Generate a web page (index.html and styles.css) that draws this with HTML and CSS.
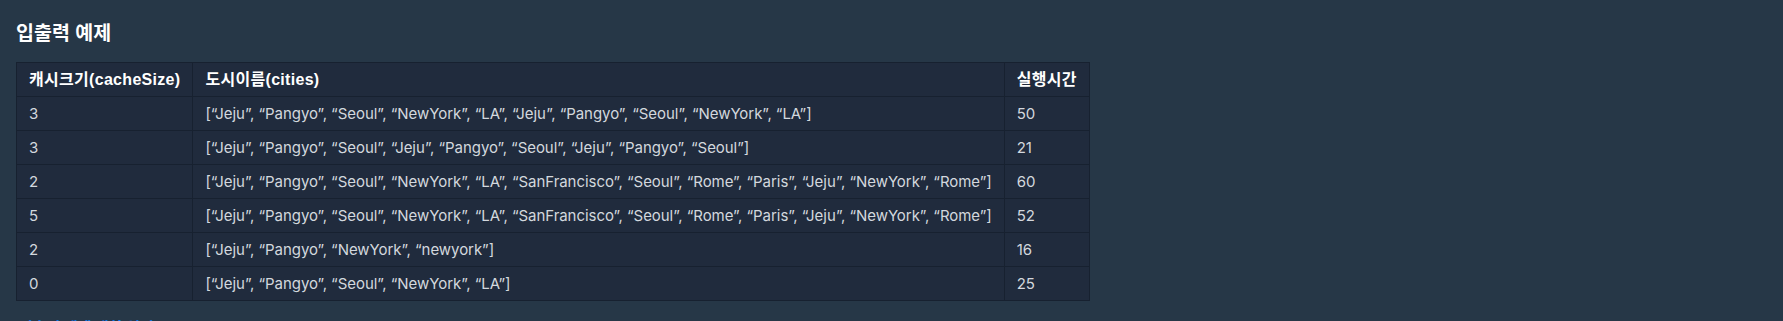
FILE: index.html
```html
<!DOCTYPE html>
<html lang="ko">
<head>
<meta charset="utf-8">
<title>입출력 예제</title>
<link rel="stylesheet" href="styles.css">
</head>
<body>
<div class="guide">
  <h5 class="title">입출력 예제</h5>
  <table class="examples">
    <thead>
      <tr><th>캐시크기(cacheSize)</th><th>도시이름(cities)</th><th>실행시간</th></tr>
    </thead>
    <tbody>
      <tr><td>3</td><td>[“Jeju”, “Pangyo”, “Seoul”, “NewYork”, “LA”, “Jeju”, “Pangyo”, “Seoul”, “NewYork”, “LA”]</td><td>50</td></tr>
      <tr><td>3</td><td>[“Jeju”, “Pangyo”, “Seoul”, “Jeju”, “Pangyo”, “Seoul”, “Jeju”, “Pangyo”, “Seoul”]</td><td>21</td></tr>
      <tr><td>2</td><td>[“Jeju”, “Pangyo”, “Seoul”, “NewYork”, “LA”, “SanFrancisco”, “Seoul”, “Rome”, “Paris”, “Jeju”, “NewYork”, “Rome”]</td><td>60</td></tr>
      <tr><td>5</td><td>[“Jeju”, “Pangyo”, “Seoul”, “NewYork”, “LA”, “SanFrancisco”, “Seoul”, “Rome”, “Paris”, “Jeju”, “NewYork”, “Rome”]</td><td>52</td></tr>
      <tr><td>2</td><td>[“Jeju”, “Pangyo”, “NewYork”, “newyork”]</td><td>16</td></tr>
      <tr><td>0</td><td>[“Jeju”, “Pangyo”, “Seoul”, “NewYork”, “LA”]</td><td>25</td></tr>
    </tbody>
  </table>
  <p class="note"><a class="link" href="#">입출력 예에 대한 설명</a></p>
</div>
</body>
</html>
```

FILE: styles.css
```css
html, body {
  margin: 0;
  padding: 0;
  background: #263747;
}
body {
  font-family: Inter, "Noto Sans CJK KR", sans-serif;
  color: #d3d8de;
  overflow: hidden;
  height: 321px;
}
.guide {
  padding: 19px 16px 0 16px;
}
.title {
  margin: 0;
  font-family: "Liberation Sans", "Noto Sans CJK KR", sans-serif;
  font-size: 19.5px;
  line-height: 28px;
  font-weight: 700;
  color: #ffffff;
}
.examples {
  margin-top: 15px;
  border-collapse: collapse;
  background: #202b3d;
  font-size: 15px;
  line-height: 21px;
}
.examples th,
.examples td {
  border: 1px solid #172130;
  padding: 6px 12px;
  text-align: left;
  white-space: nowrap;
}
.examples th {
  font-family: "Liberation Sans", "Noto Sans CJK KR", sans-serif;
  font-size: 16px;
  letter-spacing: 0.3px;
  color: #ffffff;
  font-weight: 700;
}
.examples td {
  color: #d3d8de;
  font-weight: 400;
  letter-spacing: -0.05px;
}
.note {
  margin: 16px 0 0 3px;
  font-size: 15px;
  line-height: 21px;
}
.link {
  color: #0a84ff;
  text-decoration: none;
  font-weight: 700;
}
```
